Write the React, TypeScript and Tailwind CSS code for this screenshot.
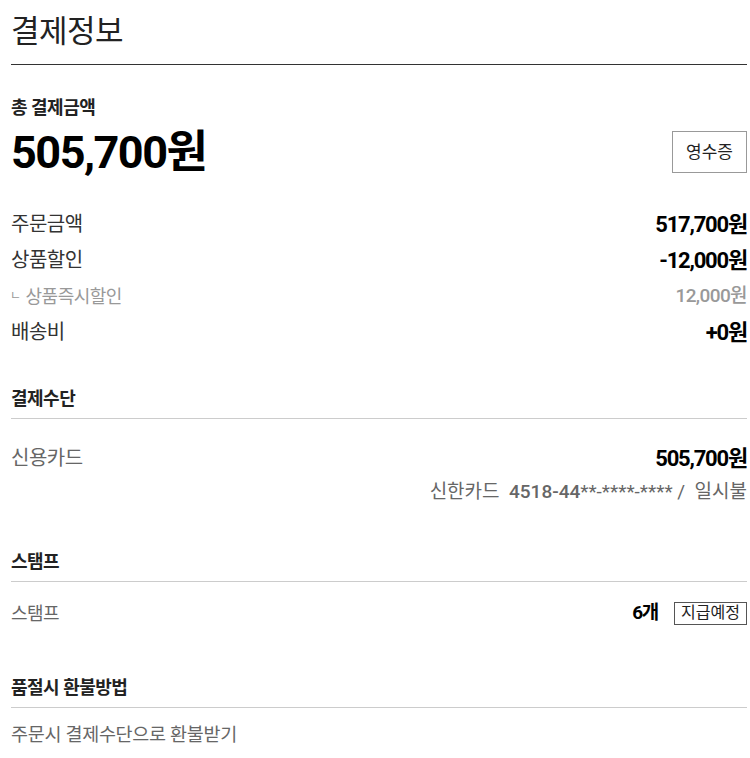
export default function App() {
  const font = { fontFamily: "Roboto, 'Noto Sans CJK KR', sans-serif" }

  return (
    <div className="bg-white min-h-screen w-[750px] pl-[11px] pr-[3px] text-[#222]" style={font}>
      <h1 className="text-[31px] leading-none pt-[16px] pb-[17px] border-b border-[#333] tracking-[-0.5px]">결제정보</h1>

      <section className="pt-[34px]">
        <div className="text-[18px] font-bold leading-none tracking-[-0.5px]">총 결제금액</div>
        <div className="flex items-start justify-between mt-[13px]">
          <div className="text-[45px] font-bold leading-none tracking-[-1.5px] text-black">505,700원</div>
          <button className="w-[75px] h-[42px] border border-[#999] text-[17px] leading-none mt-[1px] text-[#222]">
            영수증
          </button>
        </div>

        <div className="mt-[31px] flex flex-col">
          <div className="flex justify-between items-center h-[36px]">
            <span className="text-[20px] tracking-[-0.5px] text-[#333]">주문금액</span>
            <span className="text-[22px] font-bold tracking-[-1.2px] text-black">517,700원</span>
          </div>
          <div className="flex justify-between items-center h-[36px]">
            <span className="text-[20px] tracking-[-0.5px] text-[#333]">상품할인</span>
            <span className="text-[22px] font-bold tracking-[-1.2px] text-black">-12,000원</span>
          </div>
          <div className="flex justify-between items-center h-[36px] text-[#999]">
            <span className="text-[18px] tracking-[-0.5px]">
              <span className="text-[12px] mr-[5px] align-[3px] -ml-[1px]">ㄴ</span>상품즉시할인
            </span>
            <span className="text-[19px] font-medium tracking-[-0.6px]">12,000원</span>
          </div>
          <div className="flex justify-between items-center h-[36px]">
            <span className="text-[20px] tracking-[-0.5px] text-[#333]">배송비</span>
            <span className="text-[22px] font-bold tracking-[-1.2px] text-black">+0원</span>
          </div>
        </div>
      </section>

      <section className="mt-[40px]">
        <h2 className="text-[18px] font-bold leading-none pb-[10px] border-b border-[#ccc] tracking-[-0.5px]">결제수단</h2>
        <div className="flex justify-between items-center h-[30px] mt-[24px]">
          <span className="text-[20px] text-[#666] tracking-[-0.5px]">신용카드</span>
          <span className="text-[22px] font-bold tracking-[-1.2px] text-black">505,700원</span>
        </div>
        <div className="flex justify-end items-center h-[30px] mt-[4px] text-[19px] text-[#666] whitespace-pre">
          신한카드  <span className="font-medium">4518-44</span>**-****-**** /  일시불
        </div>
      </section>

      <section className="mt-[46px]">
        <h2 className="text-[18px] font-bold leading-none pb-[10px] border-b border-[#ccc] tracking-[-0.5px]">스탬프</h2>
        <div className="flex justify-between items-center h-[30px] mt-[16px]">
          <span className="text-[18px] text-[#666] tracking-[-0.5px]">스탬프</span>
          <div className="flex items-center gap-[16px]">
            <span className="text-[19px] font-bold tracking-[-1.2px] text-black">6개</span>
            <span className="border border-[#555] text-[16px] leading-none h-[23px] px-[6px] flex items-center text-[#222]">지급예정</span>
          </div>
        </div>
      </section>

      <section className="mt-[51px]">
        <h2 className="text-[18px] font-bold leading-none pb-[10px] border-b border-[#ccc] tracking-[-0.5px]">품절시 환불방법</h2>
        <div className="flex items-center h-[30px] mt-[13px] text-[18.5px] text-[#666] tracking-[-0.3px]">주문시 결제수단으로 환불받기</div>
      </section>
    </div>
  )
}
